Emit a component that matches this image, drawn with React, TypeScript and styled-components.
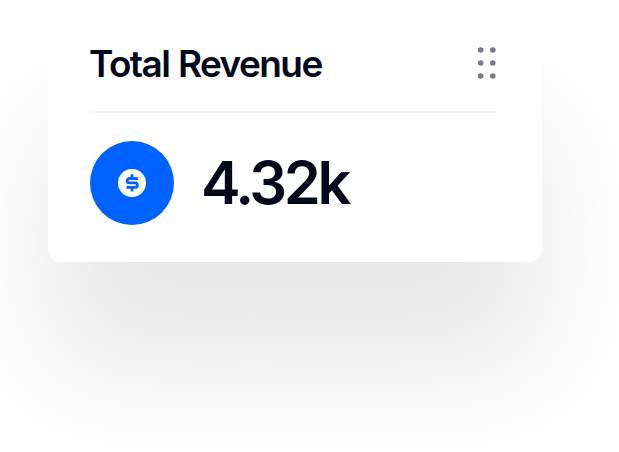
import React from "react";
import styled, { createGlobalStyle } from "styled-components";

const GlobalStyle = createGlobalStyle`
  * { box-sizing: border-box; }
  html, body { margin: 0; background: #fff; overflow: hidden; }
`;

const Page = styled.main`
  height: 452px;
  padding: 14px 0 0 48px;
  overflow: hidden;
  background: #fff;
  color: #03081b;
  font-family: Inter, "Liberation Sans", sans-serif;
`;

const Card = styled.section`
  width: 494px;
  height: 248px;
  padding: 32px 46px 0 42px;
  border-radius: 12px;
  background: #fff;
  box-shadow: 0 105px 118px rgba(0, 0, 0, 0.096);
`;

const Header = styled.header`
  display: flex;
  justify-content: space-between;
  align-items: flex-start;
  height: 67px;
  border-bottom: 2px solid #f4f4f5;
`;

const Title = styled.h2`
  margin: -1px 0 0 -1px;
  font-size: 37px;
  line-height: 37px;
  font-weight: 600;
  letter-spacing: -1.6px;
  word-spacing: 1px;
  white-space: nowrap;
`;

const Handle = styled.svg`
  display: block;
  width: 20px;
  height: 34px;
  fill: #767986;
`;

const Metric = styled.div`
  display: flex;
  align-items: center;
  gap: 27px;
  height: 84px;
  margin-top: 28px;
`;

const Badge = styled.div`
  display: grid;
  place-items: center;
  width: 84px;
  height: 84px;
  border-radius: 50%;
  background: #0062ff;
`;

const Value = styled.strong`
  margin-top: -3px;
  font-size: 59.5px;
  line-height: 84px;
  font-weight: 600;
  letter-spacing: -3.4px;
`;

const DollarCoin = () => (
  <svg width="28" height="28" viewBox="0 0 28 28" fill="none">
    <circle cx="14" cy="14" r="14" fill="#fff" />
    <path
      d="M14 5.2V9M14 18.5v4M19.8 9.5H11.3a2.2 2.2 0 0 0 0 4.4h5.8a2.2 2.2 0 0 1 0 4.5H8.5"
      stroke="#0062ff"
      strokeWidth="2.8"
    />
  </svg>
);

const dots = [4, 17, 30].flatMap((y) => [4.7, 16.8].map((x) => ({ x, y })));

export default function App() {
  return (
    <Page>
      <GlobalStyle />
      <Card>
        <Header>
          <Title>Total Revenue</Title>
          <Handle viewBox="0 0 20 34">
            {dots.map(({ x, y }) => (
              <circle key={`${x}-${y}`} cx={x} cy={y} r="2.8" />
            ))}
          </Handle>
        </Header>
        <Metric>
          <Badge>
            <DollarCoin />
          </Badge>
          <Value>4.32k</Value>
        </Metric>
      </Card>
    </Page>
  );
}
